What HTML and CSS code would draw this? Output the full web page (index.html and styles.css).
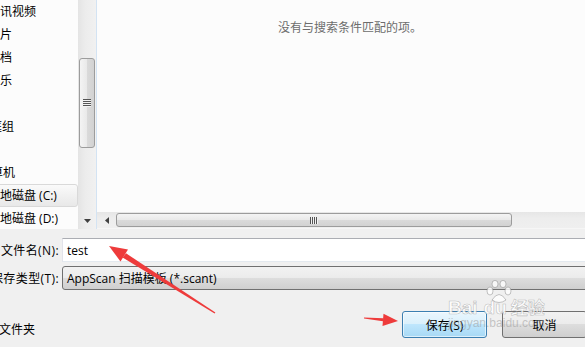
FILE: index.html
```html
<!DOCTYPE html>
<html lang="zh-CN">
<head>
<meta charset="utf-8">
<title>另存为</title>
<link rel="stylesheet" href="styles.css">
</head>
<body>
<div class="window">
  <div class="browser">
    <div class="nav">
      <ul class="tree">
        <li class="row child"><span>腾讯视频</span></li>
        <li class="row child"><span>图片</span></li>
        <li class="row child"><span>文档</span></li>
        <li class="row child"><span>音乐</span></li>
        <li class="row"></li>
        <li class="row top"><span>家庭组</span></li>
        <li class="row"></li>
        <li class="row top2"><span>计算机</span></li>
        <li class="row child selected"><span>本地磁盘 (C:)</span></li>
        <li class="row child"><span>本地磁盘 (D:)</span></li>
      </ul>
      <div class="vscroll">
        <div class="vtrack"><div class="vthumb"><span class="vgrip"></span></div></div>
        <div class="vbtn"><svg width="7" height="4" viewBox="0 0 7 4"><polygon points="0,0 7,0 3.5,4" fill="#404040"/></svg></div>
      </div>
    </div>
    <div class="pane">
      <div class="results"><p class="empty">没有与搜索条件匹配的项。</p></div>
      <div class="hscroll">
        <div class="hbtn"><svg width="4" height="7" viewBox="0 0 4 7"><polygon points="4,0 4,7 0,3.5" fill="#404040"/></svg></div>
        <div class="hthumb"><span class="hgrip"></span></div>
      </div>
    </div>
  </div>
  <div class="form">
    <div class="fields">
      <label class="label">文件名(N):</label>
      <div class="input">test</div>
      <label class="label">保存类型(T):</label>
      <div class="select">AppScan 扫描模板 (*.scant)</div>
    </div>
    <div class="bottom">
      <span class="folders">文件夹</span>
      <div class="buttons">
        <button class="btn primary">保存(S)</button>
        <button class="btn">取消</button>
      </div>
    </div>
  </div>
</div>
<div class="watermark">
  <svg class="paw" width="30" height="24" viewBox="0 0 30 24">
    <g fill="rgba(255,255,255,0.8)" stroke="rgba(110,110,110,0.4)" stroke-width="1">
      <ellipse cx="6" cy="11" rx="3" ry="4"/>
      <ellipse cx="11" cy="4" rx="3" ry="3.6"/>
      <ellipse cx="19" cy="4" rx="3" ry="3.6"/>
      <ellipse cx="24" cy="11" rx="3" ry="4"/>
      <path d="M8 20 Q15 9 22 20 Q15 25 8 20 Z"/>
    </g>
  </svg>
  <div class="wm-logo"><span>Bai</span><span class="du">du</span><span class="jy">经验</span></div>
  <div class="wm-url">jingyan.baidu.com</div>
</div>
<svg class="arrows" width="585" height="347" viewBox="0 0 585 347">
  <g fill="#ee3b3b">
    <polygon points="109,246 128,249.5 120.5,261.5"/>
    <polygon points="122.6,257.6 126.0,253.3 215.4,312.6 214.6,313.4"/>
    <polygon points="398,321 383.5,313.7 382.5,326"/>
    <polygon points="383.1,318.2 382.9,321.2 364,318.5 364,317.5"/>
  </g>
</svg>
</body>
</html>
```
FILE: styles.css
```css
* { box-sizing: border-box; margin: 0; padding: 0; }

body {
  width: 585px;
  height: 347px;
  overflow: hidden;
  position: relative;
  background: #f0f0f0;
  font-family: "Open Sans", "Noto Sans CJK SC", sans-serif;
  font-size: 12px;
  color: #000;
}

.window { width: 585px; }

.browser { display: flex; height: 229px; }

.nav { display: flex; width: 96px; flex: none; }

.tree {
  list-style: none;
  width: 78px;
  background: #fcfcfc;
  overflow: hidden;
}

.row {
  display: flex;
  align-items: center;
  height: 23px;
  white-space: nowrap;
}
.row span { flex: none; line-height: 16px; }
.child span { margin-left: -12px; }
.top span { margin-left: -22px; }
.top2 span { margin-left: -21px; }

.row.selected {
  margin-left: -20px;
  padding-left: 19px;
  border: 1px solid #d9d9d9;
  border-radius: 3px;
  background: linear-gradient(#fafafa, #e8e8e8);
}

.vscroll {
  width: 18px;
  display: flex;
  flex-direction: column;
  background: linear-gradient(to right, #e4e4e4, #ececec 40%, #f1f1f1);
}
.vtrack { flex: 1; padding: 58px 1px 0 1px; }
.vthumb {
  height: 90px;
  border: 1px solid #9c9c9c;
  border-radius: 3px;
  background: linear-gradient(to right, #f4f4f4, #e9e9e9 50%, #dadada 51%, #d2d2d2);
  display: flex;
  align-items: center;
  justify-content: center;
}
.vgrip {
  width: 8px;
  height: 8px;
  background: repeating-linear-gradient(to bottom, #555 0 1px, #f2f2f2 1px 2px);
}
.vbtn {
  height: 17px;
  display: flex;
  align-items: center;
  justify-content: center;
  padding-left: 1px;
}

.pane {
  flex: 1;
  min-width: 0;
  display: flex;
  flex-direction: column;
  border-left: 1px solid #d3e3f3;
}
.results {
  flex: 1;
  background: #fcfcfc;
  padding: 19px 0 0 181px;
}
.empty {
  color: #6d6d6d;
  line-height: 18px;
  white-space: nowrap;
}

.hscroll {
  height: 17px;
  display: flex;
  padding: 1px 0;
  background: linear-gradient(#e6e6e6, #ededed 40%, #efefef);
  border-bottom: 1px solid #f6f6f6;
}
.hbtn {
  width: 19px;
  display: flex;
  align-items: center;
  justify-content: center;
  flex: none;
}
.hthumb {
  width: 396px;
  flex: none;
  border: 1px solid #9c9c9c;
  border-radius: 3px;
  background: linear-gradient(#f4f4f4, #e9e9e9 50%, #dadada 51%, #d2d2d2);
  display: flex;
  align-items: center;
  justify-content: center;
}
.hgrip {
  width: 8px;
  height: 7px;
  background: repeating-linear-gradient(to right, #555 0 1px, #f2f2f2 1px 2px);
}

.form { padding-top: 9px; }

.fields {
  display: grid;
  grid-template-columns: 59px 560px;
  column-gap: 3px;
  row-gap: 4px;
}
.label {
  display: flex;
  justify-content: flex-end;
  align-items: center;
  white-space: nowrap;
  letter-spacing: 0.4px;
}
.input {
  height: 24px;
  background: #fff;
  border: 1px solid;
  border-color: #abadb3 #dbdfe6 #e3e9ef #e2e3ea;
  padding-left: 4px;
  display: flex;
  align-items: center;
}
.select {
  height: 24px;
  border: 1px solid #707070;
  border-radius: 3px;
  background: linear-gradient(#f2f2f2 0, #ebebeb 50%, #dddddd 50%, #cfcfcf 100%);
  padding-left: 4px;
  display: flex;
  align-items: center;
  white-space: nowrap;
}

.bottom {
  display: flex;
  align-items: flex-start;
  width: 587px;
  margin-top: 21px;
}
.folders {
  margin: 10px 0 0 -1px;
  line-height: 18px;
}
.buttons {
  margin-left: auto;
  display: flex;
  gap: 15px;
}
.btn {
  width: 85px;
  height: 27px;
  font: inherit;
  color: #000;
  border: 1px solid #707070;
  border-radius: 3px;
  background: linear-gradient(#f2f2f2 0, #ebebeb 50%, #dddddd 50%, #cfcfcf 100%);
}
.btn.primary {
  border-color: #3c7fb1;
  background: linear-gradient(#eaf6fd 0, #d9f0fc 50%, #bee6fd 50%, #a7d9f5 100%);
  box-shadow: inset 0 0 0 1px rgba(255,255,255,0.6);
}

.watermark {
  position: absolute;
  left: 440px;
  top: 278px;
  width: 120px;
  pointer-events: none;
}
.paw { position: absolute; left: 44px; top: 2px; }
.wm-logo {
  position: absolute;
  left: 8px;
  top: 16px;
  font-family: "Liberation Sans", sans-serif;
  font-weight: bold;
  font-size: 19px;
  color: rgba(255,255,255,0.8);
  -webkit-text-stroke: 0.6px rgba(100,100,100,0.4);
  white-space: nowrap;
}
.wm-logo .du { margin-left: 6px; }
.wm-logo .jy { font-family: "Noto Sans CJK SC", sans-serif; font-size: 17px; margin-left: 4px; }
.wm-url {
  position: absolute;
  left: 8px;
  top: 38px;
  font-family: "Liberation Sans", sans-serif;
  font-size: 12px;
  color: rgba(150,150,150,0.5);
  white-space: nowrap;
}

.arrows {
  position: absolute;
  left: 0;
  top: 0;
  pointer-events: none;
}
```
